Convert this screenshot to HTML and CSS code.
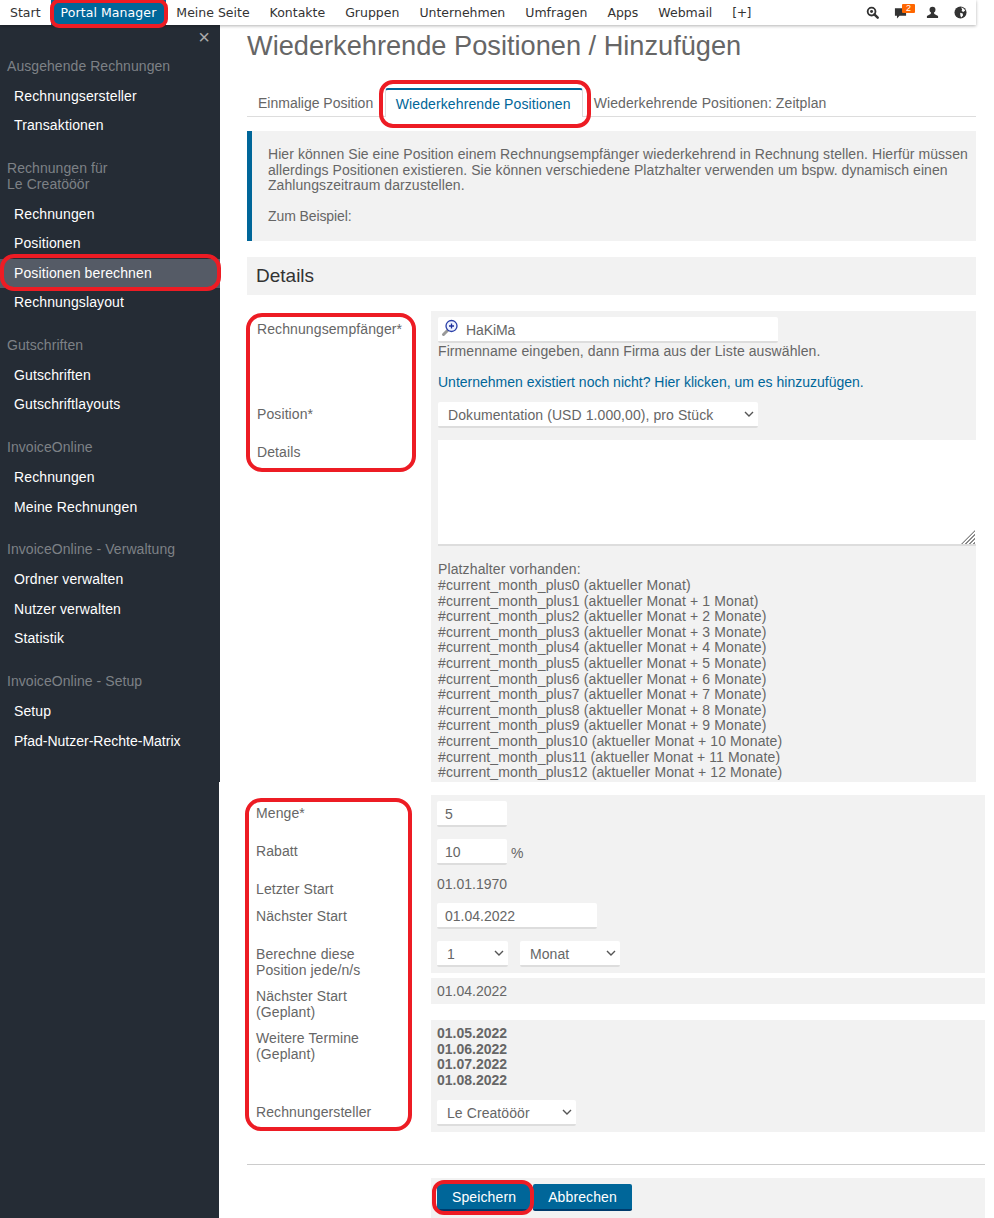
FILE: index.html
```html
<!DOCTYPE html>
<html lang="de">
<head>
<meta charset="utf-8">
<title>Wiederkehrende Positionen / Hinzufügen</title>
<link rel="stylesheet" href="styles.css">
</head>
<body>
<header class="topbar">
  <nav class="topnav">
    <a class="topnav-item">Start</a>
    <a class="topnav-item is-active">Portal Manager</a>
    <a class="topnav-item">Meine Seite</a>
    <a class="topnav-item">Kontakte</a>
    <a class="topnav-item">Gruppen</a>
    <a class="topnav-item">Unternehmen</a>
    <a class="topnav-item">Umfragen</a>
    <a class="topnav-item">Apps</a>
    <a class="topnav-item">Webmail</a>
    <a class="topnav-item topnav-more">[+]</a>
  </nav>
  <div class="topicons">
    <svg class="ticon" viewBox="0 0 14 14"><circle cx="6" cy="6" r="4.2" fill="none" stroke="#333" stroke-width="2"/><circle cx="6" cy="6" r="1.6" fill="#333"/><path d="M9 9l3.6 3.6" stroke="#333" stroke-width="2.6" stroke-linecap="round"/></svg>
    <span class="chat">
      <svg class="ticon" viewBox="0 0 14 14"><path d="M1 2.5h12v8H6L3.2 13.4V10.500H1z" fill="#333"/></svg>
      <span class="badge">2</span>
    </span>
    <svg class="ticon" viewBox="0 0 14 14"><circle cx="7" cy="4" r="3.2" fill="#333"/><path d="M5.600 6.500h2.800l.6 2.200 4 2v2.300H1v-2.300l4-2z" fill="#333"/></svg>
    <svg class="ticon" viewBox="0 0 14 14"><circle cx="7" cy="7" r="6.500" fill="#333"/><path d="M7.500 1.500c2 .2 3.800 1.500 4.600 3.300L10 6.500 8.200 5.300 8.800 3.500zM6.600 7.300l2.800.8.300 2-1.800 2.300-1-1.600z" fill="#fff"/></svg>
  </div>
</header>
<div class="shell">
  <aside class="sidebar">
    <div class="side-close">×</div>
    <section class="side-group">
      <h3 class="side-title">Ausgehende Rechnungen</h3>
      <a class="side-item">Rechnungsersteller</a>
      <a class="side-item">Transaktionen</a>
    </section>
    <section class="side-group">
      <h3 class="side-title">Rechnungen für<br>Le Creatööör</h3>
      <a class="side-item">Rechnungen</a>
      <a class="side-item">Positionen</a>
      <a class="side-item is-active">Positionen berechnen</a>
      <a class="side-item">Rechnungslayout</a>
    </section>
    <section class="side-group">
      <h3 class="side-title">Gutschriften</h3>
      <a class="side-item">Gutschriften</a>
      <a class="side-item">Gutschriftlayouts</a>
    </section>
    <section class="side-group">
      <h3 class="side-title">InvoiceOnline</h3>
      <a class="side-item">Rechnungen</a>
      <a class="side-item">Meine Rechnungen</a>
    </section>
    <section class="side-group">
      <h3 class="side-title">InvoiceOnline - Verwaltung</h3>
      <a class="side-item">Ordner verwalten</a>
      <a class="side-item">Nutzer verwalten</a>
      <a class="side-item">Statistik</a>
    </section>
    <section class="side-group">
      <h3 class="side-title">InvoiceOnline - Setup</h3>
      <a class="side-item">Setup</a>
      <a class="side-item side-item-long">Pfad-Nutzer-Rechte-Matrix</a>
    </section>
  </aside>
  <main class="main">
    <div class="upper">
      <h1 class="page-title">Wiederkehrende Positionen / Hinzufügen</h1>
      <div class="tabs">
        <a class="tab tab-first">Einmalige Position</a>
        <a class="tab is-active">Wiederkehrende Positionen</a>
        <a class="tab tab-last">Wiederkehrende Positionen: Zeitplan</a>
      </div>
      <div class="info">
        Hier können Sie eine Position einem Rechnungsempfänger wiederkehrend in Rechnung stellen. Hierfür müssen allerdings Positionen existieren. Sie können verschiedene Platzhalter verwenden um bspw. dynamisch einen Zahlungszeitraum darzustellen.<br><br><span class="info-example">Zum Beispiel:</span>
      </div>
      <h2 class="section-title">Details</h2>
      <div class="form-a">
        <div class="row">
          <label class="row-label">Rechnungsempfänger*</label>
          <div class="row-field field-first">
            <div class="search-input">
              <svg class="search-icon" viewBox="0 0 18 18"><path d="M7 11l-4.500 4.500" stroke="#999" stroke-width="3" stroke-linecap="round"/><circle cx="10.500" cy="7" r="5.500" fill="#eef2ff" stroke="#2a3fa8" stroke-width="1.300"/><path d="M8 7h5M10.500 4.500v5" stroke="#1c2f9a" stroke-width="1.300"/></svg>
              <input class="plain-input" type="text" value="HaKiMa">
            </div>
            <p class="hint">Firmenname eingeben, dann Firma aus der Liste auswählen.<br><br><a class="link">Unternehmen existiert noch nicht? Hier klicken, um es hinzuzufügen.</a></p>
          </div>
        </div>
        <div class="row">
          <label class="row-label">Position*</label>
          <div class="row-field">
            <select class="select select-position"><option>Dokumentation (USD 1.000,00), pro Stück</option></select>
          </div>
        </div>
        <div class="row">
          <label class="row-label">Details</label>
          <div class="row-field field-details">
            <div class="textarea-wrap"><textarea class="textarea"></textarea></div>
            <p class="placeholders">Platzhalter vorhanden:<br>#current_month_plus0 (aktueller Monat)<br>#current_month_plus1 (aktueller Monat + 1 Monat)<br>#current_month_plus2 (aktueller Monat + 2 Monate)<br>#current_month_plus3 (aktueller Monat + 3 Monate)<br>#current_month_plus4 (aktueller Monat + 4 Monate)<br>#current_month_plus5 (aktueller Monat + 5 Monate)<br>#current_month_plus6 (aktueller Monat + 6 Monate)<br>#current_month_plus7 (aktueller Monat + 7 Monate)<br>#current_month_plus8 (aktueller Monat + 8 Monate)<br>#current_month_plus9 (aktueller Monat + 9 Monate)<br>#current_month_plus10 (aktueller Monat + 10 Monate)<br>#current_month_plus11 (aktueller Monat + 11 Monate)<br>#current_month_plus12 (aktueller Monat + 12 Monate)</p>
          </div>
        </div>
      </div>
    </div>
    <div class="form-b">
      <div class="row">
        <label class="row-label">Menge*</label>
        <div class="row-field"><input class="input input-short" type="text" value="5"></div>
      </div>
      <div class="row">
        <label class="row-label">Rabatt</label>
        <div class="row-field"><input class="input input-short" type="text" value="10"><span class="unit">%</span></div>
      </div>
      <div class="row">
        <label class="row-label">Letzter Start</label>
        <div class="row-field field-text">01.01.1970</div>
      </div>
      <div class="row">
        <label class="row-label label-low">Nächster Start</label>
        <div class="row-field"><input class="input input-date" type="text" value="01.04.2022"></div>
      </div>
      <div class="row">
        <label class="row-label label-low label-over">Berechne diese<br>Position jede/n/s</label>
        <div class="row-field field-pair">
          <select class="select select-num"><option>1</option></select>
          <select class="select select-unit"><option>Monat</option></select>
        </div>
      </div>
      <div class="row row-gap-s">
        <label class="row-label label-over">Nächster Start<br>(Geplant)</label>
        <div class="row-field field-text">01.04.2022</div>
      </div>
      <div class="row row-gap-l">
        <label class="row-label">Weitere Termine<br>(Geplant)</label>
        <div class="row-field field-text field-dates">01.05.2022<br>01.06.2022<br>01.07.2022<br>01.08.2022</div>
      </div>
      <div class="row">
        <label class="row-label">Rechnungersteller</label>
        <div class="row-field"><select class="select select-creator"><option>Le Creatööör</option></select></div>
      </div>
      <hr class="divider">
      <div class="row">
        <div class="row-label"></div>
        <div class="row-field field-actions">
          <button class="btn" type="button">Speichern</button>
          <button class="btn" type="button">Abbrechen</button>
        </div>
      </div>
    </div>
  </main>
</div>
<div class="mark mark-nav"></div>
<div class="mark mark-tab"></div>
<div class="mark mark-side"></div>
<div class="mark mark-form-a"></div>
<div class="mark mark-form-b"></div>
<div class="mark mark-save"></div>
</body>
</html>
```
FILE: styles.css
```css
* { box-sizing: border-box; }
html, body { margin: 0; padding: 0; }
body {
  position: relative;
  width: 994px;
  height: 1218px;
  overflow: hidden;
  background: #fff;
  color: #666;
  font: 14px/15.6px "Liberation Sans", Arial, sans-serif;
}

/* top bar */
.topbar {
  position: relative;
  z-index: 2;
  display: flex;
  justify-content: space-between;
  width: 976px;
  height: 25px;
  background: #fff;
  box-shadow: 0 1px 3px rgba(0,0,0,.3);
}
.topnav { display: flex; }
.topnav-item {
  padding: 0 10px;
  color: #333;
  font: 12.5px/25px "DejaVu Sans", Verdana, sans-serif;
}
.topnav-item.is-active { background: #006699; color: #fff; letter-spacing: .08px; }
.topnav-more { letter-spacing: -.6px; }
.topicons {
  display: flex;
  align-items: center;
  gap: 15px;
  padding-right: 9px;
}
.ticon { display: block; width: 13px; height: 13px; }
.chat { position: relative; display: block; margin-right: 4px; }
.badge {
  position: absolute;
  top: -2px;
  left: 8px;
  width: 13px;
  height: 9px;
  border-radius: 1px;
  background: #f60;
  color: #fff;
  font: 9px/9px "Liberation Sans", sans-serif;
  text-align: center;
}

/* shell */
.shell { display: flex; height: 1193px; }

/* sidebar */
.sidebar {
  flex: 0 0 220px;
  background:
    linear-gradient(#252c35, #252c35) left top / 220px 757px no-repeat,
    linear-gradient(#252c35, #252c35) left top / 219px 100% no-repeat;
}
.side-close {
  height: 33.700px;
  padding: 2px 10px 0 0;
  color: #aaa;
  font: 20px/20px "Liberation Sans", sans-serif;
  text-align: right;
}
.side-group { margin-bottom: 20.300px; }
.side-title {
  margin: 0 0 7.400px;
  padding-left: 7px;
  color: #7d8186;
  font-size: 14px;
  font-weight: normal;
  line-height: 15.600px;
  letter-spacing: .06px;
}
.side-item {
  display: block;
  padding-left: 14px;
  color: #fff;
  line-height: 29.500px;
  letter-spacing: .12px;
}
.side-item-long { letter-spacing: 0; }
.side-item.is-active { background: #555b66; }

/* main */
.main { flex: 1; min-width: 0; padding: 0 9px 0 27px; }
.upper { margin-right: 9px; }
.page-title {
  margin: 0;
  padding: 5px 0 0;
  color: #666;
  font-size: 27.200px;
  font-weight: normal;
  line-height: 31px;
}
.tabs {
  display: flex;
  height: 29px;
  margin-top: 27px;
  border-bottom: 1px solid #ddd;
}
.tab { padding: 8px 11px 0; color: #666; }
.tab-first { padding-right: 12px; }
.tab-last { letter-spacing: .09px; }
.tab.is-active {
  height: 29px;
  padding: 7px 11px 0 9.500px;
  border: 1px solid #ddd;
  border-top: 2px solid #006699;
  border-bottom: 0;
  border-radius: 3px 3px 0 0;
  background: #fff;
  color: #006699;
  letter-spacing: .12px;
}
.info {
  height: 110px;
  margin-top: 14px;
  padding: 16px 8px 0 16px;
  border-left: 5px solid #006699;
  background: #f2f2f2;
  letter-spacing: .07px;
}
.info-example { letter-spacing: -.1px; }
.section-title {
  height: 38px;
  margin: 16px 0;
  padding-left: 9px;
  background: #f2f2f2;
  color: #333;
  font-size: 19px;
  font-weight: normal;
  line-height: 38px;
}

/* forms */
.row { display: grid; grid-template-columns: 184px 1fr; }
.row-label { padding: 11px 0 0 10px; letter-spacing: .1px; }
.row-field { padding: 6px 0 6px 7px; background: #f2f2f2; min-width: 0; }
.form-a .field-first { padding-bottom: 5.200px; }
.form-a .field-details { padding-bottom: .900px; }
.form-b { margin-top: 13px; }
.form-b .row-label { padding-left: 9px; }
.form-b .row-field { padding-left: 6px; }
.label-low { padding-top: 12px; }
.label-over { margin-bottom: -20px; }
.row-gap-s { margin-top: 5px; }
.row-gap-l { margin-top: 16px; }

.field-text { padding-top: 6px !important; padding-bottom: 4.400px !important; }
.field-dates { font-weight: bold; line-height: 15.700px; padding-top: 5.600px !important; padding-bottom: 5.600px !important; }
.field-pair { display: flex; gap: 12px; }
.hint { margin: 1px 0 0; letter-spacing: .09px; }
.link { color: #006699; letter-spacing: 0; }
.placeholders { margin: 16.500px 0 0; letter-spacing: .12px; }

.input, .plain-input, .select, .textarea {
  color: #666;
  font: 14px "Liberation Sans", Arial, sans-serif;
  outline: 0;
}
.input, .select, .search-input {
  display: block;
  height: 26px;
  border: 0;
  border-bottom: 2px solid #ddd;
  border-radius: 2px;
  background-color: #fff;
}
.input { padding: 2px 8px 0; }
.input-short { display: inline-block; width: 70px; vertical-align: top; }
.input-date { width: 160px; }
.unit { display: inline-block; margin-left: 4px; padding-top: 7px; }
.search-input { display: flex; align-items: center; width: 340px; }
.search-icon { flex: none; width: 18px; height: 18px; margin: 0 0 2px 3px; }
.plain-input {
  flex: 1;
  min-width: 0;
  margin-left: 7px;
  padding: 2px 0 0;
  border: 0;
  background: transparent;
  letter-spacing: -.1px;
}
.select {
  padding: 2px 0 0 10px;
  appearance: none;
  -webkit-appearance: none;
  letter-spacing: .08px;
  background-image: url("data:image/svg+xml,%3Csvg xmlns='http://www.w3.org/2000/svg' width='10' height='6'%3E%3Cpath d='M1 1l4 4 4-4' fill='none' stroke='%23555' stroke-width='1.400'/%3E%3C/svg%3E");
  background-repeat: no-repeat;
  background-position: right 4px center;
}
.select-position { width: 320px; }
.select-num { width: 71px; }
.select-unit { width: 100px; }
.select-creator { width: 139px; }
.textarea-wrap { position: relative; }
.textarea-wrap::after {
  content: "";
  position: absolute;
  right: 1px;
  bottom: 2px;
  width: 14px;
  height: 14px;
  background: repeating-linear-gradient(-45deg, #8a8a8a 0, #8a8a8a 1.500px, transparent 1.500px, transparent 3px);
  clip-path: polygon(100% 0, 100% 100%, 0 100%);
  pointer-events: none;
}
.textarea {
  display: block;
  width: 100%;
  height: 106px;
  margin: 0;
  padding: 4px;
  border: 0;
  border-bottom: 2px solid #ddd;
  background: #fff;
  resize: none;
}
.divider {
  height: 1px;
  margin: 32px 0 13px;
  border: 0;
  background: #ccc;
}
.field-actions { display: flex; gap: 2px; height: 40px; }
.btn {
  height: 27px;
  padding: 0 15px;
  border: 0;
  border-bottom: 2px solid #003a6b;
  border-radius: 2px;
  background: #006699;
  color: #fff;
  font: 14px "Liberation Sans", Arial, sans-serif;
  letter-spacing: .12px;
}

/* red annotations laid over the screenshot */
.mark {
  position: absolute;
  z-index: 5;
  border: 4px solid #ed1c24;
  pointer-events: none;
}
.mark-nav { left: 50px; top: -1px; width: 118px; height: 29px; border-radius: 9px; }
.mark-tab { left: 379px; top: 80px; width: 212px; height: 48px; border-radius: 14px; }
.mark-side { left: 0; top: 254px; width: 221px; height: 37px; border-radius: 14px; }
.mark-form-a { left: 246px; top: 313px; width: 170px; height: 159px; border-radius: 16px; }
.mark-form-b { left: 245px; top: 798px; width: 167px; height: 333px; border-radius: 16px; }
.mark-save { left: 432px; top: 1180px; width: 102px; height: 35px; border-radius: 12px; }
```
